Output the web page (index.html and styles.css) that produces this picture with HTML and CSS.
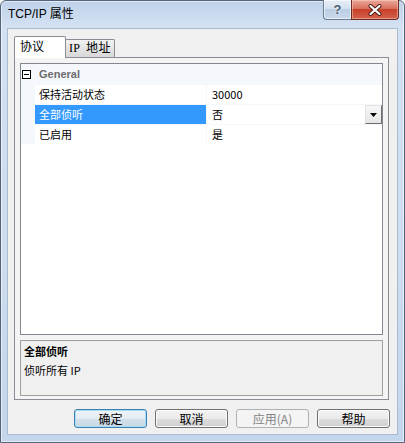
FILE: index.html
```html
<!DOCTYPE html>
<html lang="zh-CN">
<head>
<meta charset="utf-8">
<title>TCP/IP 属性</title>
<link rel="stylesheet" href="styles.css">
</head>
<body>
<div class="window">
  <div class="titlebar">
    <span class="title">TCP/IP 属性</span>
    <div class="caption-buttons">
      <div class="cap-btn help">?</div>
      <div class="cap-btn close">
        <svg width="14" height="12" viewBox="0 0 14 12" aria-hidden="true">
          <path d="M2.5 2 L11.5 10 M11.5 2 L2.5 10" stroke="#4a1a12" stroke-width="4" stroke-linecap="round" fill="none"/>
          <path d="M2.5 2 L11.5 10 M11.5 2 L2.5 10" stroke="#ffffff" stroke-width="2.2" stroke-linecap="round" fill="none"/>
        </svg>
      </div>
    </div>
  </div>
  <div class="client">
    <div class="tabs">
      <div class="tab active">协议</div>
      <div class="tab inactive">IP 地址</div>
    </div>
    <div class="tabpage">
      <div class="grid">
        <div class="row category">
          <div class="margin"><span class="expander"></span></div>
          <div class="cat-label">General</div>
        </div>
        <div class="row">
          <div class="margin"></div>
          <div class="name">保持活动状态</div>
          <div class="value">30000</div>
        </div>
        <div class="row selected">
          <div class="margin"></div>
          <div class="name">全部侦听</div>
          <div class="value"><span class="value-text">否</span><span class="dropdown"><svg width="7" height="4" viewBox="0 0 7 4" aria-hidden="true"><path d="M0 0 H7 L3.5 4 Z" fill="#000"/></svg></span></div>
        </div>
        <div class="row">
          <div class="margin"></div>
          <div class="name">已启用</div>
          <div class="value">是</div>
        </div>
      </div>
      <div class="desc">
        <div class="desc-title">全部侦听</div>
        <div class="desc-text">侦听所有 IP</div>
      </div>
    </div>
    <div class="buttons">
      <button class="btn default">确定</button>
      <button class="btn">取消</button>
      <button class="btn disabled" disabled>应用(A)</button>
      <button class="btn">帮助</button>
    </div>
  </div>
</div>
</body>
</html>
```

FILE: styles.css
```css
* { box-sizing: border-box; }
html, body { margin: 0; padding: 0; }
body {
  width: 405px;
  height: 443px;
  overflow: hidden;
  background: #ffffff;
  font-family: "Noto Sans CJK SC", "Liberation Sans", sans-serif;
  font-size: 12px;
  color: #000;
}
.window {
  width: 405px;
  height: 443px;
  border: 1px solid #52637a;
  border-radius: 6px 6px 0 0;
  background: linear-gradient(180deg, #bfd2ea 0%, #d3e1f2 26px, #cddcee 60%, #c4d6ec 100%);
  box-shadow: inset 0 0 0 1px rgba(255,255,255,0.55);
  display: flex;
  flex-direction: column;
}
.titlebar {
  height: 27px;
  display: flex;
  align-items: flex-start;
}
.title {
  padding-left: 7px;
  line-height: 26px;
  font-family: "Liberation Sans", "Noto Sans CJK SC", sans-serif;
  font-size: 12px;
  color: #000;
}
.caption-buttons {
  margin-left: auto;
  margin-right: 5px;
  margin-top: -1px;
  display: flex;
}
.cap-btn {
  height: 20px;
  display: flex;
  align-items: center;
  justify-content: center;
}
.help {
  width: 28px;
  border: 1px solid #6b7d93;
  border-right: none;
  border-top: none;
  border-radius: 0 0 0 4px;
  background: linear-gradient(180deg, #e6eef7 0%, #d2dfee 50%, #bccee4 50%, #c9d9ec 100%);
  box-shadow: inset 0 0 0 1px rgba(255,255,255,0.6);
  font-family: "Liberation Sans", sans-serif;
  font-weight: bold;
  font-size: 13px;
  color: #4b5c72;
  text-shadow: 0 0 2px #ffffff;
  line-height: 19px;
}
.close {
  width: 48px;
  border: 1px solid #6d2b20;
  border-top: none;
  border-radius: 0 0 4px 0;
  background: linear-gradient(180deg, #eaa89a 0%, #d9705c 45%, #c7402a 50%, #d2614a 100%);
  box-shadow: inset 0 0 0 1px rgba(255,220,210,0.45);
}
.close svg { display: block; }
.client {
  flex: 1;
  margin: 0 6px 7px 6px;
  border: 1px solid #a9bbd0;
  background: #f0f0f0;
  padding: 7px 0 0 6px;
  display: flex;
  flex-direction: column;
}
.tabs {
  height: 21px;
  display: flex;
  align-items: flex-end;
  font-family: "Liberation Serif", "Noto Sans CJK SC", serif;
  font-size: 12px;
}
.tab {
  border: 1px solid #898c95;
  border-bottom: none;
  border-radius: 2px 2px 0 0;
  white-space: nowrap;
  overflow: hidden;
}
.tab.active {
  width: 52px;
  height: 22px;
  margin-bottom: -1px;
  position: relative;
  z-index: 2;
  background: #ffffff;
  padding-left: 5px;
  line-height: 20px;
}
.tab.inactive {
  width: 50px;
  height: 18px;
  margin-left: -1px;
  background: linear-gradient(180deg, #f2f2f2 0%, #e4e4e4 50%, #d8d8d8 100%);
  padding-left: 3px;
  line-height: 17px;
  letter-spacing: 0.3px;
  word-spacing: 3px;
}
.tabpage {
  width: 375px;
  height: 343px;
  border: 1px solid #898c95;
  background: #f4f4f4;
  padding: 5px 5px 3px 5px;
  display: flex;
  flex-direction: column;
  position: relative;
  z-index: 1;
}
.grid {
  height: 272px;
  border: 1px solid #828790;
  background: #ffffff;
  font-size: 11px;
}
.row {
  display: flex;
  height: 20px;
  border-top: 1px solid #f4f7fc;
}
.row.category {
  border-top: none;
  background: #f4f7fc;
}
.margin {
  width: 14px;
  background: #f4f7fc;
  flex: none;
  display: flex;
  align-items: center;
  padding-left: 1px;
}
.expander {
  width: 9px;
  height: 9px;
  border: 1px solid #000;
  background: #fff;
  position: relative;
}
.expander::after {
  content: "";
  position: absolute;
  left: 1px;
  right: 1px;
  top: 3px;
  height: 1px;
  background: #000;
}
.cat-label {
  padding-left: 4px;
  font-family: "Liberation Sans", sans-serif;
  font-weight: bold;
  font-size: 11px;
  color: #6d6d6d;
  line-height: 20px;
}
.name {
  width: 172px;
  flex: none;
  padding-left: 4px;
  line-height: 19px;
  border-right: 1px solid #f4f7fc;
  white-space: nowrap;
}
.value {
  flex: 1;
  padding-left: 5px;
  line-height: 19px;
  display: flex;
}
.row.selected .name {
  background: #3399ff;
  color: #ffffff;
}
.value-text { flex: 1; }
.dropdown {
  width: 17px;
  height: 19px;
  border: 1px solid;
  border-color: #e2e2e2 #6e6e6e #6e6e6e #e2e2e2;
  background: linear-gradient(180deg, #f7f7f7, #e6e6e6);
  display: flex;
  align-items: center;
  justify-content: center;
}
.dropdown svg { display: block; }
.desc {
  margin-top: 5px;
  height: 56px;
  border: 1px solid #a0a0a0;
  background: #f0f0f0;
  padding: 1px 3px 0 3px;
  font-size: 11px;
  line-height: 19px;
}
.desc-title { font-weight: bold; }
.buttons {
  margin-top: 9px;
  padding-right: 7px;
  display: flex;
  justify-content: flex-end;
  gap: 8px;
}
.btn {
  width: 73px;
  height: 19px;
  margin: 0;
  padding: 0;
  border: 1px solid #707070;
  border-radius: 3px;
  background: linear-gradient(180deg, #f2f2f2 0%, #ebebeb 50%, #dddddd 50%, #cfcfcf 100%);
  box-shadow: inset 0 0 0 1px #fbfbfb;
  font-family: "Noto Sans CJK SC", "Liberation Sans", sans-serif;
  font-size: 12px;
  line-height: 17px;
  color: #000;
}
.btn.default {
  border-color: #3c7fb1;
  background: linear-gradient(180deg, #eef4f8 0%, #e4ecf2 50%, #d3e0ea 50%, #c9d8e5 100%);
  box-shadow: inset 0 0 0 1px #a7def5;
}
.btn.disabled {
  border-color: #adb2b5;
  background: #f4f4f4;
  box-shadow: none;
  color: #838383;
}
```
